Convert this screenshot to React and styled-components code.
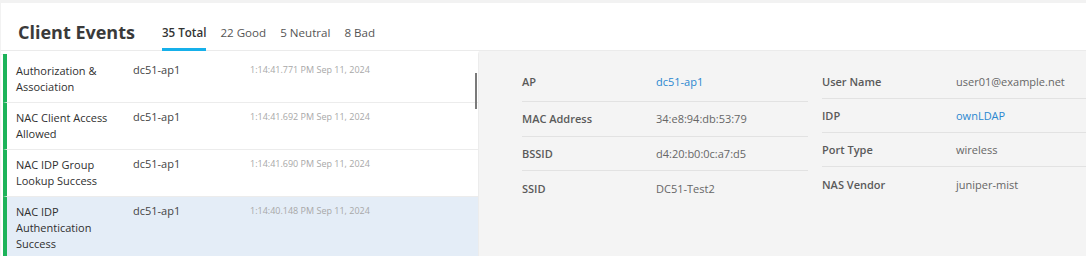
import React from "react";
import styled, { createGlobalStyle } from "styled-components";

const events = [
    { name: "Authorization & Association", ap: "dc51-ap1", time: "1:14:41.771 PM Sep 11, 2024" },
    { name: "NAC Client Access Allowed", ap: "dc51-ap1", time: "1:14:41.692 PM Sep 11, 2024" },
    { name: "NAC IDP Group Lookup Success", ap: "dc51-ap1", time: "1:14:41.690 PM Sep 11, 2024" },
    { name: "NAC IDP Authentication Success", ap: "dc51-ap1", time: "1:14:40.148 PM Sep 11, 2024", selected: true },
];

const leftDetails = [
    { label: "AP", value: "dc51-ap1", link: true },
    { label: "MAC Address", value: "34:e8:94:db:53:79" },
    { label: "BSSID", value: "d4:20:b0:0c:a7:d5" },
    { label: "SSID", value: "DC51-Test2" },
];

const rightDetails = [
    { label: "User Name", value: "user01@example.net" },
    { label: "IDP", value: "ownLDAP", link: true },
    { label: "Port Type", value: "wireless" },
    { label: "NAS Vendor", value: "juniper-mist" },
];

const tabs = ["35 Total", "22 Good", "5 Neutral", "8 Bad"];

function App() {
    return (
        <>
            <GlobalStyle />
            <Page>
                <Header>
                    <Title>Client Events</Title>
                    <Tabs>
                        {tabs.map((t, i) => (
                            <Tab key={t} $active={i === 0}>
                                {t}
                            </Tab>
                        ))}
                    </Tabs>
                </Header>
                <Body>
                    <EventList>
                        {events.map((ev) => (
                            <EventRow key={ev.time} $selected={ev.selected}>
                                <EventName>{ev.name}</EventName>
                                <EventAp>{ev.ap}</EventAp>
                                <EventTime>{ev.time}</EventTime>
                            </EventRow>
                        ))}
                        <ScrollThumb />
                    </EventList>
                    <Details>
                        <DetailGroup $width="286px">
                            {leftDetails.map((d, i) => (
                                <DetailRow key={d.label} $tall={i === 0} $height="34.5px">
                                    <DetailLabel>{d.label}</DetailLabel>
                                    <DetailValue $link={d.link}>{d.value}</DetailValue>
                                </DetailRow>
                            ))}
                        </DetailGroup>
                        <DetailGroup>
                            {rightDetails.map((d) => (
                                <DetailRow key={d.label}>
                                    <DetailLabel>{d.label}</DetailLabel>
                                    <DetailValue $link={d.link}>{d.value}</DetailValue>
                                </DetailRow>
                            ))}
                        </DetailGroup>
                    </Details>
                </Body>
            </Page>
        </>
    );
}

const GlobalStyle = createGlobalStyle`
    * {
        box-sizing: border-box;
    }
    body {
        margin: 0;
        background: #f4f4f4;
        font-family: "Open Sans", "Noto Sans", sans-serif;
    }
`;

const Page = styled.div`
    width: 1086px;
    height: 256px;
    overflow: hidden;
    padding: 3px 0 0 1px;
    background: #f2f2f2;
`;

const Header = styled.header`
    height: 48px;
    display: flex;
    align-items: flex-end;
    padding-left: 17px;
    background: #ffffff;
    border-bottom: 1px solid #ebebeb;
`;

const Title = styled.h1`
    margin: 0;
    padding-bottom: 6px;
    font-size: 18px;
    line-height: 24px;
    font-weight: 700;
    color: #3a3a3a;
`;

const Tabs = styled.nav`
    display: flex;
    gap: 14px;
    margin-left: 27px;
`;

const Tab = styled.div`
    font-size: 11.6px;
    line-height: 18px;
    padding-bottom: 6px;
    margin-bottom: -1px;
    font-weight: ${(p) => (p.$active ? 600 : 400)};
    color: ${(p) => (p.$active ? "#333" : "#555")};
    border-bottom: 3px solid ${(p) => (p.$active ? "#16b0ea" : "transparent")};
`;

const Body = styled.div`
    display: flex;
    height: 205px;
`;

const EventList = styled.div`
    position: relative;
    width: 478px;
    background: #ffffff;
    border-right: 1px solid #ececec;
    border-top: 3px solid #fff;
    box-shadow: inset 0 1px 0 #f1f1f1;
`;

const EventRow = styled.div`
    display: grid;
    grid-template-columns: 117px 117px 1fr;
    margin-left: 2px;
    padding: 7px 0 7px 9px;
    border-left: 4px solid #1db35a;
    border-bottom: 1px solid #ececec;
    background: ${(p) => (p.$selected ? "#e4edf7" : "#ffffff")};

    &:first-child {
        padding-top: 9px;
    }
`;

const EventName = styled.div`
    font-size: 11px;
    line-height: 16px;
    color: #2f2f2f;
    padding-right: 10px;
`;

const EventAp = styled.div`
    font-size: 11px;
    line-height: 14px;
    color: #444;
`;

const EventTime = styled.div`
    font-size: 9px;
    line-height: 14px;
    color: #a8a8a8;
`;

const ScrollThumb = styled.div`
    position: absolute;
    right: 1px;
    top: 19px;
    width: 2px;
    height: 36px;
    background: #7a7a7a;
`;

const Details = styled.section`
    flex: 1;
    display: flex;
    gap: 14px;
    padding: 14px 0 0 43px;
    background: #f4f4f4;
`;

const DetailGroup = styled.div`
    ${(p) => (p.$width ? `width: ${p.$width};` : "flex: 1;")}
`;

const DetailRow = styled.div`
    display: grid;
    grid-template-columns: 134px 1fr;
    align-items: center;
    height: ${(p) => (p.$tall ? "37px" : p.$height || "34px")};
    padding-bottom: ${(p) => (p.$tall ? "3px" : "0")};
    border-bottom: 1px solid #e2e2e2;

    &:last-child {
        border-bottom: none;
    }
`;

const DetailLabel = styled.div`
    font-size: 11px;
    font-weight: 600;
    color: #5a5a5a;
`;

const DetailValue = styled.div`
    font-size: 11px;
    color: ${(p) => (p.$link ? "#2a87d0" : "#666")};
`;

export default App;
